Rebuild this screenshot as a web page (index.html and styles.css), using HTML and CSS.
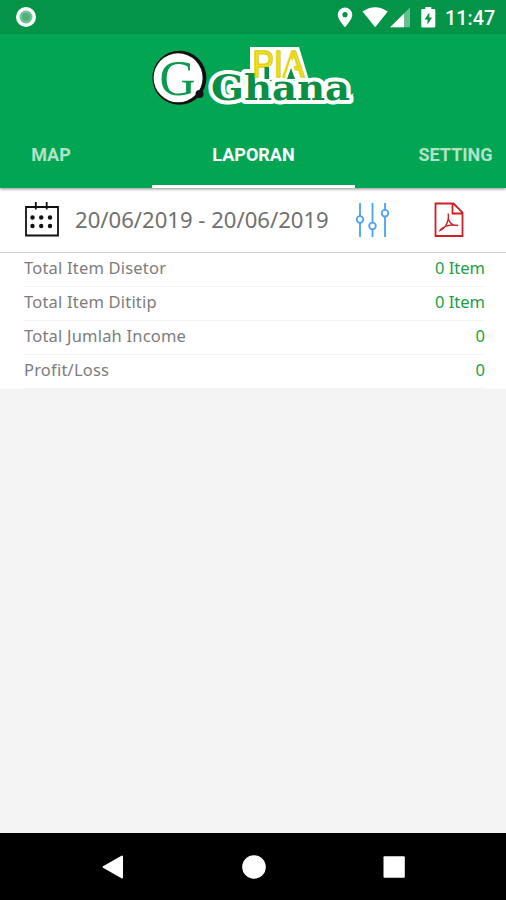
FILE: index.html
```
<!DOCTYPE html>
<html lang="id">
<head>
    <meta charset="UTF-8">
    <meta name="viewport" content="width=device-width, initial-scale=1.0">
    <title>Pia Ghana</title>
    <link rel="stylesheet" href="styles.css">
</head>
<body>
    <header class="header">
        <div class="status-bar">
            <svg class="record" width="22" height="22" viewBox="0 0 22 22">
                <circle cx="11" cy="11" r="10" fill="#fff"/>
                <circle cx="11" cy="11" r="6.500" fill="#6cc497"/>
                <circle cx="11" cy="11" r="4" fill="#4fb07c"/>
            </svg>
            <svg class="status-icons" width="100" height="24" viewBox="336 5 100 24" fill="#fff">
                <path fill-rule="evenodd" d="M345 7.500a7.300 7.300 0 0 1 7.300 7.300c0 4.800-7.300 12.500-7.300 12.500s-7.300-7.700-7.300-12.500a7.300 7.300 0 0 1 7.300-7.300zm0 4.600a2.600 2.600 0 1 0 0 5.200 2.600 2.600 0 0 0 0-5.200z"/>
                <path d="M362.500 11.500q12.500-8.700 25.300 0L375.200 27.200z"/>
                <path d="M390.200 27.200L410 7.500V27.200z" opacity=".4"/>
                <path d="M390.200 27.200L404 13.400V27.200z"/>
                <path fill-rule="evenodd" d="M425.300 7h6v2h2.700q1.300 0 1.300 1.300v16q0 1.300-1.300 1.300h-11.400q-1.300 0-1.300-1.300v-16q0-1.300 1.300-1.300h2.700zm4 5.500l-4.800 7h3v5l4.600-7h-2.800z"/>
            </svg>
            <span class="clock">11:47</span>
        </div>
        <svg class="logo" width="208" height="66" viewBox="150 44 208 66">
            <circle cx="179.400" cy="77.800" r="27" fill="#111"/>
            <circle cx="178.100" cy="77.800" r="24.500" fill="#fff"/>
            <circle cx="199.500" cy="94" r="4" fill="#111"/>
            <text class="logo-g" x="159.500" y="94.500" textLength="36" lengthAdjust="spacingAndGlyphs">G</text>
            <path d="M250 47H299L309 80H250zM341 103l13-10-5 10z" fill="#fff"/>
            <text class="logo-name" x="211" y="99.500" textLength="139" lengthAdjust="spacingAndGlyphs">Ghana</text>
            <text class="logo-pia" x="252.500" y="76.500" textLength="52" lengthAdjust="spacingAndGlyphs">PIA</text>
            <!-- the A has no crossbar -->
            <path d="M291 58l-6 19.500h12z" fill="#fff"/>
            <path d="M291 68l-4 11h8z" fill="#0a8f45"/>
            <path d="M264.500 67h4.500v12h-4.500z" fill="#0a8f45"/>
        </svg>
        <nav class="tabs">
            <a class="tab tab-map">MAP</a>
            <a class="tab tab-active">LAPORAN</a>
            <a class="tab tab-setting">SETTING</a>
        </nav>
    </header>

    <main>
        <div class="toolbar">
            <svg width="36" height="36" viewBox="0 0 36 36">
                <path d="M2 5h32v28.500H2zM11.800 0v7.500M22.700 0v7.500" fill="none" stroke="#111" stroke-width="1.800"/>
                <g fill="#111">
                    <circle cx="8.500" cy="15.500" r="2.200"/><circle cx="17.200" cy="15.500" r="2.200"/><circle cx="26" cy="15.500" r="2.200"/>
                    <circle cx="8.500" cy="24" r="2.200"/><circle cx="17.200" cy="24" r="2.200"/><circle cx="26" cy="24" r="2.200"/>
                </g>
            </svg>
            <span class="dates">20/06/2019 - 20/06/2019</span>
            <svg class="filter" width="36" height="36" viewBox="0 0 36 36" fill="#fff" stroke="#4aa3ee" stroke-width="1.800">
                <path d="M5 1v34M17.500 1v34M30 1v34"/>
                <circle cx="5" cy="17.500" r="3.300"/>
                <circle cx="17.500" cy="24" r="3.300"/>
                <circle cx="30" cy="11.200" r="3.300"/>
            </svg>
            <svg class="pdf" width="30" height="36" viewBox="0 0 30 36" fill="none" stroke="#cc2022" stroke-width="1.800">
                <path d="M1.500 1.500h18l9 9V34h-27zM18.500 1.500v10h10"/>
                <path d="M14.200 11.500c.8 5-.5 9-2.700 12.500-1.500 2.300-3.500 4-5.500 4.500 1-2 4-3.800 7-4.700 3.500-1 7-1 11-.3-4.500.3-8-2.500-9.500-6" stroke-width="1.400"/>
            </svg>
        </div>
        <ul class="summary">
            <li><span>Total Item Disetor</span><span class="value">0 Item</span></li>
            <li><span>Total Item Dititip</span><span class="value">0 Item</span></li>
            <li><span>Total Jumlah Income</span><span class="value">0</span></li>
            <li><span>Profit/Loss</span><span class="value">0</span></li>
        </ul>
    </main>

    <footer class="nav-bar">
        <svg width="24" height="26" viewBox="0 0 24 26"><path d="M2.500 13L21 2.500v21z" fill="#fff" stroke="#fff" stroke-width="2" stroke-linejoin="round"/></svg>
        <svg width="24" height="26" viewBox="0 0 24 26"><circle cx="12" cy="13" r="11.800" fill="#fff"/></svg>
        <svg width="24" height="26" viewBox="0 0 24 26"><rect x="1.500" y="2.200" width="21.300" height="21.500" rx="1" fill="#fff"/></svg>
    </footer>
</body>
</html>
```
FILE: styles.css
```
* {
    box-sizing: border-box;
}
body {
    margin: 0;
    height: 900px;
    display: flex;
    flex-direction: column;
    background-color: #f4f4f4;
    font-family: "Noto Sans", sans-serif;
}
svg {
    display: block;
    flex-shrink: 0;
}
.header {
    height: 188px;
    display: flex;
    flex-direction: column;
    background-color: #02a552;
    font-family: Roboto, sans-serif;
    box-shadow: 0 1px 3px rgba(0, 0, 0, 0.45);
    z-index: 1;
}
.status-bar {
    height: 34px;
    padding: 0 11px 0 15px;
    display: flex;
    align-items: center;
    background-color: #039447;
    color: #fff;
}
.status-icons {
    margin-left: auto;
}
.clock {
    width: 50px;
    margin-left: 9px;
    padding-top: 2px;
    font-size: 19.8px;
    font-weight: 500;
    white-space: nowrap;
}
.logo {
    margin: 10px 0 0 150px;
}
.logo-g {
    font-family: "Liberation Serif", serif;
    font-size: 51px;
    fill: #0a9a4c;
}
.logo-pia {
    font-family: "Liberation Sans", sans-serif;
    font-size: 36px;
    fill: #f3e51c;
    stroke: #e0cf1c;
    stroke-width: 1.6px;
}
.logo-name {
    font-family: "DejaVu Serif", serif;
    font-size: 36px;
    font-weight: bold;
    fill: #0a8f45;
    stroke: #fff;
    stroke-width: 8px;
    stroke-linejoin: round;
    paint-order: stroke;
}
.tabs {
    margin-top: auto;
    height: 68px;
    display: flex;
    color: rgba(255, 255, 255, 0.7);
    font-size: 18px;
    font-weight: 700;
    line-height: 69px;
}
.tab {
    text-align: center;
}
.tab-map {
    width: 152px;
    padding-right: 50px;
}
.tab-active {
    width: 203px;
    border-bottom: 3px solid #fff;
    color: #fff;
}
.tab-setting {
    width: 151px;
    padding-left: 50px;
}
.toolbar {
    height: 65px;
    padding: 0 42px 1px 24px;
    display: flex;
    align-items: center;
    background-color: #fff;
    border-bottom: 1px solid #d0d0d0;
}
.dates {
    width: 254px;
    margin-left: 15px;
    padding-bottom: 2px;
    color: #707070;
    font-size: 22.1px;
    white-space: nowrap;
}
.filter {
    margin-left: 26px;
}
.pdf {
    margin-left: auto;
}
.summary {
    margin: 0;
    padding: 0 21px 0 24px;
    list-style: none;
    background-color: #fff;
}
.summary li {
    height: 34px;
    display: flex;
    justify-content: space-between;
    border-bottom: 1px solid #f3f3f3;
    color: #7c7c7c;
    font-size: 16.5px;
    letter-spacing: 0.2px;
    line-height: 30px;
}
.summary .value {
    color: #17a045;
    letter-spacing: 0;
}
.nav-bar {
    margin-top: auto;
    height: 67px;
    padding: 0 100px 0 101px;
    display: flex;
    align-items: center;
    justify-content: space-between;
    background-color: #000;
}
```
